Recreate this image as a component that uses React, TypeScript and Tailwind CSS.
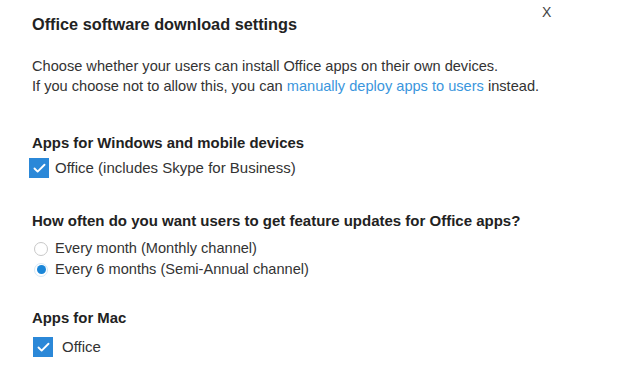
import { Check } from 'lucide-react';

function Checkbox({ label, gap }: { label: string; gap: string }) {
  return (
    <div className={'flex h-[20px] items-center ' + gap}>
      <span className="flex h-[20px] w-[20px] items-center justify-center bg-[#2b88d8]">
        <Check className="h-[15px] w-[15px] text-white" strokeWidth={3} />
      </span>
      <span className="text-[15px] leading-[20px] text-[#333]">{label}</span>
    </div>
  );
}

function Radio({ label, checked }: { label: string; checked?: boolean }) {
  return (
    <div className="flex h-[21px] items-center gap-[7px]">
      <span
        className={
          checked
            ? 'flex h-[14px] w-[14px] items-center justify-center rounded-full border border-[#d6e8f6]'
            : 'flex h-[14px] w-[14px] items-center justify-center rounded-full border border-[#c8c8c8]'
        }
      >
        {checked && <span className="h-[9px] w-[9px] rounded-full bg-[#1a86d8]" />}
      </span>
      <span className="text-[14.6px] leading-[21px] text-[#333]">{label}</span>
    </div>
  );
}

export default function App() {
  return (
    <main className="relative h-[367px] w-[623px] bg-white font-['Liberation_Sans',Arial,sans-serif] text-[#333]">
      <button className="absolute left-[542px] top-[2px] text-[14px] leading-[20px] text-[#444]">X</button>

      <div className="px-[32px] pt-[12px]">
        <h1 className="text-[16.3px] font-bold leading-[24px] text-[#222]">Office software download settings</h1>

        <p className="mt-[20px] text-[14.6px] leading-[20px]">
          Choose whether your users can install Office apps on their own devices.
          <br />
          If you choose not to allow this, you can{' '}
          <a className="text-[#3a96dd]">manually deploy apps to users</a> instead.
        </p>

        <h2 className="mt-[37px] text-[14.9px] font-bold leading-[20px] text-[#222]">
          Apps for Windows and mobile devices
        </h2>
        <div className="-ml-[3px] mt-[5px]">
          <Checkbox label="Office (includes Skype for Business)" gap="gap-[6px]" />
        </div>

        <h2 className="mt-[33px] text-[15px] font-bold leading-[20px] text-[#222]">
          How often do you want users to get feature updates for Office apps?
        </h2>
        <div className="ml-[2px] mt-[7px] flex flex-col">
          <Radio label="Every month (Monthly channel)" />
          <Radio label="Every 6 months (Semi-Annual channel)" checked />
        </div>

        <h2 className="mt-[28px] text-[14.9px] font-bold leading-[20px] text-[#222]">Apps for Mac</h2>
        <div className="ml-[1px] mt-[9px]">
          <Checkbox label="Office" gap="gap-[9px]" />
        </div>
      </div>
    </main>
  );
}
